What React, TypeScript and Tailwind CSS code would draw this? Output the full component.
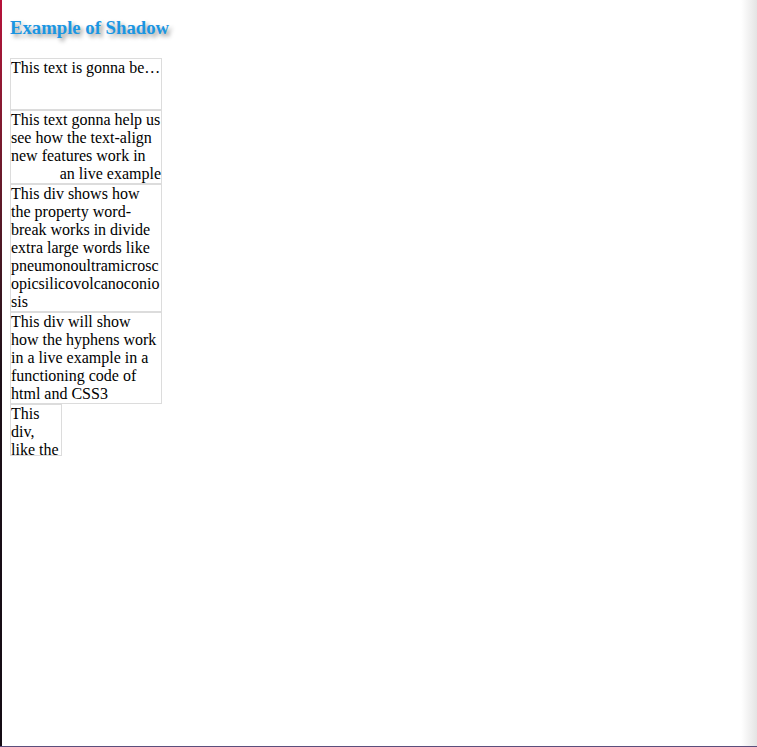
export default function App() {
  return (
    <div className="flex h-[747px] w-full overflow-hidden border-b border-[#5b4f7c] bg-white font-['Liberation_Serif',serif] text-black">
      <div className="w-[2px] shrink-0 bg-gradient-to-b from-[#b8103a] via-[#1c0f18] to-[#140c14]" />
      <div className="flex-1 px-2 pb-2">
        <h3 className="mb-[18.5px] mt-[17px] text-[18.72px] font-bold leading-[normal] text-[#1a96e2] [text-shadow:3px_3px_4px_#9a9a9a]">
          Example of Shadow
        </h3>
        <div className="text-base leading-[normal]">
          <div className="h-[52px] w-[152px] overflow-hidden text-ellipsis whitespace-nowrap border border-[#dcdcdc]">
            This text is gonna be truncated with an ellipsis at the end
          </div>
          <div className="w-[152px] border border-[#dcdcdc] text-left [text-align-last:right]">
            This text gonna help us see how the text-align new features work in an live example
          </div>
          <div className="w-[152px] break-words border border-[#dcdcdc]">
            This div shows how the property word-break works in divide extra large words like pneumonoultramicroscopicsilicovolcanoconiosis
          </div>
          <div className="w-[152px] border border-[#dcdcdc]">
            This div will show how the hyphens work in a live example in a functioning code of html and CSS3
          </div>
          <div className="h-[52px] w-[52px] overflow-hidden border border-[#dcdcdc]">
            This div, like{'\u00a0'}the others, will hide the overflow
          </div>
        </div>
      </div>
      <div className="w-[16px] shrink-0 bg-gradient-to-r from-white to-[#e4e4e4]" />
    </div>
  )
}
